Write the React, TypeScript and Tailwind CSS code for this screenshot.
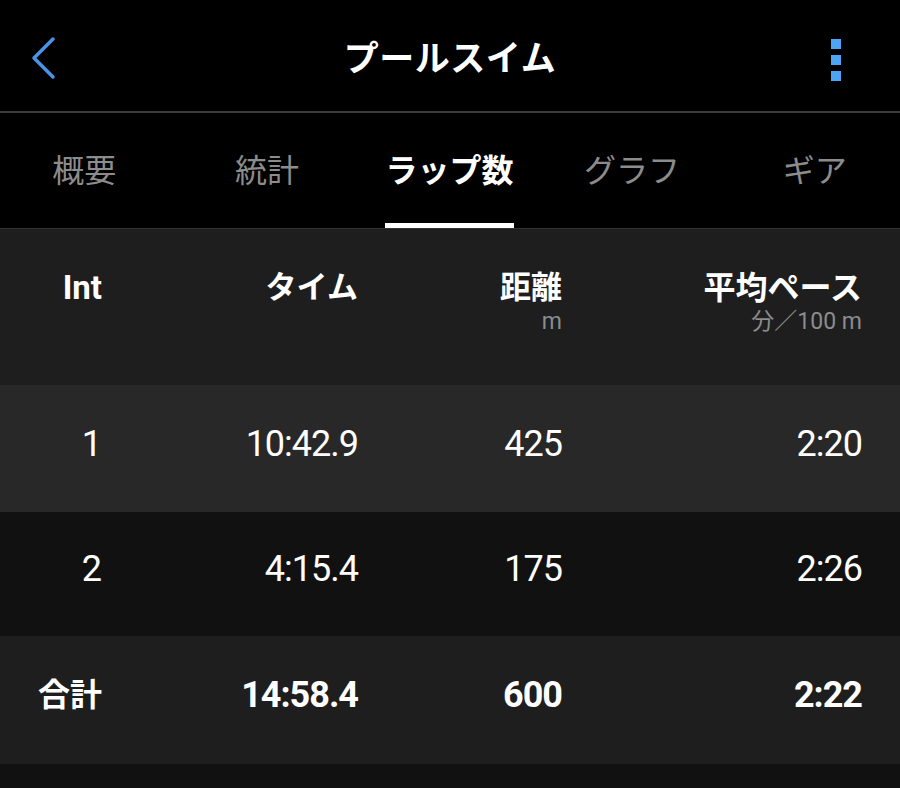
import React from 'react';

interface Lap {
  id: string;
  label: string;
  time: string;
  distance: string;
  pace: string;
  bg: string;
  h: string;
  bold?: boolean;
}

const tabs = [
  { id: 'summary', label: '概要' },
  { id: 'stats', label: '統計' },
  { id: 'laps', label: 'ラップ数', active: true },
  { id: 'graph', label: 'グラフ' },
  { id: 'gear', label: 'ギア' }
];

const laps: Lap[] = [
  { id: '1', label: '1', time: '10:42.9', distance: '425', pace: '2:20', bg: 'bg-[#282828]', h: 'h-[127px]' },
  { id: '2', label: '2', time: '4:15.4', distance: '175', pace: '2:26', bg: 'bg-[#111111]', h: 'h-[124px]' },
  { id: 'total', label: '合計', time: '14:58.4', distance: '600', pace: '2:22', bg: 'bg-[#1e1e1e]', h: 'h-[128px]', bold: true }
];

const cols = 'grid grid-cols-[102px_256px_204px_300px] pr-[38px] text-right';

const App = () => {
  return (
    <div className="w-[900px] h-[788px] overflow-hidden bg-[#111111] text-white font-['Roboto','Noto_Sans_CJK_JP',sans-serif]">
      {/* top bar */}
      <div className="h-[111px] bg-black grid grid-cols-[1fr_auto_1fr] items-center">
        <div className="pl-[31px] pt-[5px]">
          <svg width="26" height="44" viewBox="0 0 26 44" fill="none">
            <path d="M22 3 L3 22 L22 41" stroke="#4a94e8" strokeWidth="3.5" strokeLinecap="round" strokeLinejoin="round" />
          </svg>
        </div>
        <h1 className="text-[35px] font-bold tracking-[0.5px] pt-[9px]">プールスイム</h1>
        <div className="flex justify-end pr-[59px] pt-[9px]">
          <div className="flex flex-col gap-[6px]">
            <span className="block w-[10px] h-[10px] bg-[#4da3f5]" />
            <span className="block w-[10px] h-[10px] bg-[#4da3f5]" />
            <span className="block w-[10px] h-[10px] bg-[#4da3f5]" />
          </div>
        </div>
      </div>
      <div className="h-[2px] bg-[#3c3c3c]" />

      {/* tabs */}
      <div className="h-[115px] bg-black overflow-hidden">
        <div className="w-[913px] -ml-[7px] h-full grid grid-cols-5">
          {tabs.map((tab) => (
            <div key={tab.id} className="flex justify-center h-full">
              <div className="relative flex items-center h-full">
                <span
                  className={
                    tab.active
                      ? 'text-[32px] font-bold text-white'
                      : 'text-[32px] text-[#8c8c8c]'
                  }
                >
                  {tab.label}
                </span>
                {tab.active && <div className="absolute left-0 right-0 bottom-0 h-[5px] bg-white" />}
              </div>
            </div>
          ))}
        </div>
      </div>

      {/* table header */}
      <div className={`${cols} h-[157px] bg-[#1e1e1e] border-t border-[#333333] pt-[41px]`}>
        <div className="text-[33px] font-bold leading-[36px]">Int</div>
        <div className="text-[31px] font-bold leading-[36px]">タイム</div>
        <div>
          <div className="text-[31px] font-bold leading-[36px]">距離</div>
          <div className="text-[23px] leading-[32px] text-[#8c8c8c]">m</div>
        </div>
        <div>
          <div className="text-[32px] font-bold leading-[36px]">平均ペース</div>
          <div className="text-[23px] leading-[32px] text-[#8c8c8c]">分／100 m</div>
        </div>
      </div>

      {/* laps */}
      {laps.map((lap) => (
        <div key={lap.id} className={`${cols} ${lap.h} ${lap.bg} items-center pb-[10px]`}>
          <div className={lap.bold ? 'text-[32px] font-bold' : 'text-[36px]'}>{lap.label}</div>
          <div className={`text-[36px] tracking-[-1px] ${lap.bold ? 'font-bold' : ''}`}>{lap.time}</div>
          <div className={`text-[36px] tracking-[-1px] ${lap.bold ? 'font-bold' : ''}`}>{lap.distance}</div>
          <div className={`text-[36px] tracking-[-1px] ${lap.bold ? 'font-bold' : ''}`}>{lap.pace}</div>
        </div>
      ))}
    </div>
  );
};

export default App;
